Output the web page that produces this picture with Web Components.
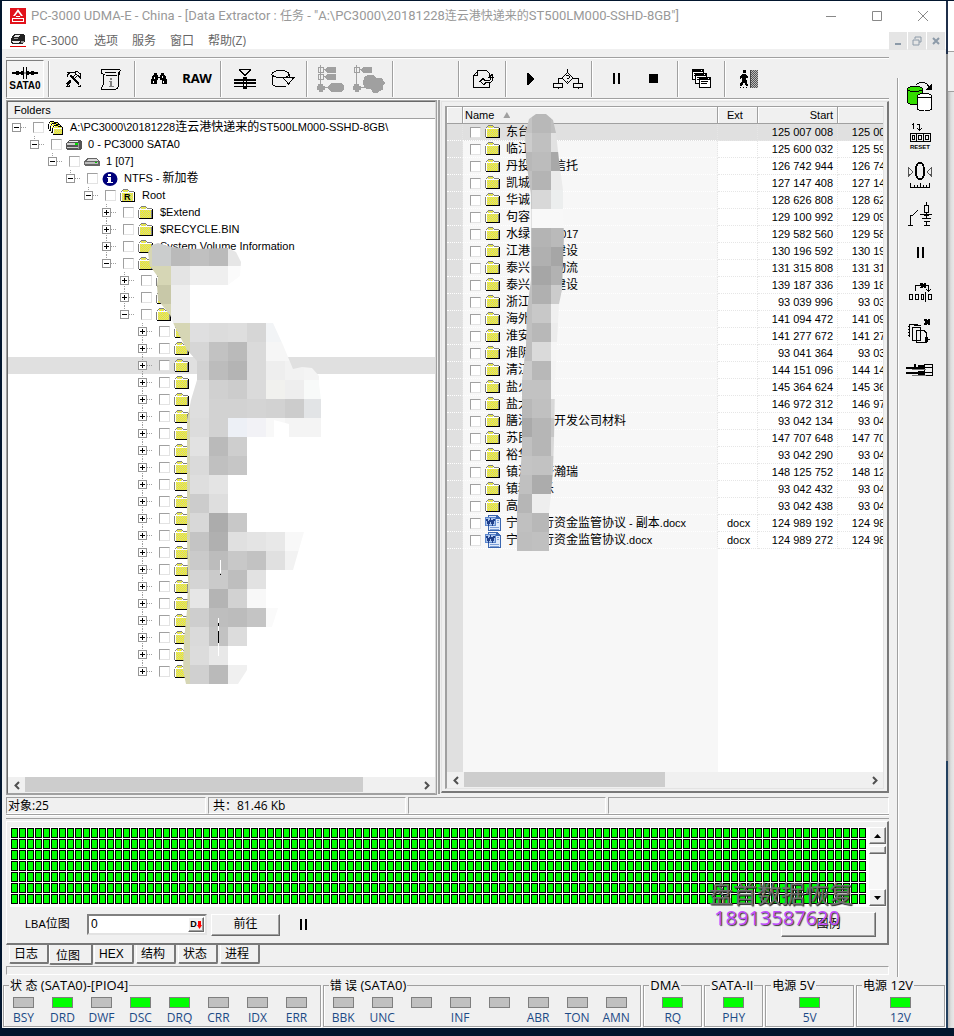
<!DOCTYPE html>
<html lang="zh-CN">
<head>
<meta charset="utf-8">
<title>PC-3000 UDMA-E</title>
<style>
  html { background: #02162e; }
  body {
    margin: 0; min-height: 100vh; display: flex;
    font: 11px/17px "Liberation Sans", "Noto Sans CJK SC", sans-serif; color: #000;
    --ui: "Open Sans", "Noto Sans CJK SC", sans-serif;
    --face: #f0f0f0; --line: #a0a0a0; --dark: #696969;
  }
  pc-desktop { flex: 1; min-width: 0; }
</style>
</head>
<body>
<pc-desktop></pc-desktop>

<script>
const CJK = /([\u3000-\u9fff\uff00-\uffef]+)/;
const esc = s => s.replace(/&/g, "&amp;").replace(/</g, "&lt;");
// Chinese runs are set in their own size beside the Latin text; "_" stands for one blank character cell
const mixed = s => s.split(CJK).map(p => CJK.test(p) ? `<span class="c">${p}</span>` : esc(p).replace(/_/g, '<i class="b"></i>')).join("");
const MIX = `.c{font-size:12px} .b{display:inline-block;width:12px}`;

class Part extends HTMLElement {
  connectedCallback() {
    if (this.shadowRoot) return;
    this.attachShadow({ mode: "open" }).innerHTML =
      `<style>*{box-sizing:border-box} button{font:inherit;color:inherit;margin:0;padding:0;border:0;background:none} ${this.css()}</style>${this.html()}`;
  }
  css() { return ":host{display:block}"; }
  html() { return "<slot></slot>"; }
  a(n, d = "") { return this.getAttribute(n) ?? d; }
}
const def = (name, css, html) => customElements.define(name, class extends Part {
  css() { return typeof css === "function" ? css(this) : css; }
  html() { return typeof html === "function" ? html(this) : (html ?? "<slot></slot>"); }
});

/* ---------- icons: [width, height, markup] ---------- */
const CHK = `<defs><pattern id="k" width="2" height="2" patternUnits="userSpaceOnUse"><path fill="#ff0" d="M0 0h2v2H0z"/><path fill="#c6c6b0" d="M1 0h1v1H1zM0 1h1v1H0z"/></pattern></defs>`;
const L = (d, w = 1, c = "#000") => `<path fill="none" stroke="${c}" stroke-width="${w}" d="${d}"/>`;
const F = (d, c = "#000") => `<path fill="${c}" d="${d}"/>`;
const G = "#a0a0a0";
const ICONS = {
  logo: [16, 16, F("M0 0h16v16H0z", "#e2121b") + `<g shape-rendering="auto">${F("M8 1l5 7h-2L8 4 5 8H3z", "#fff")}${F("M2 10h12v1H2zM3 13h10v1H3zM6 8h4v1H6z", "#fff")}${L("M2.5 14v-4M13.500 14v-4", 1, "#fff")}</g>`],
  drive: [16, 15, F("M4 1h9l2 2v5l-3 3H2L1 9V6z", "#222") + F("M5 2h5l-2 2H3zM2 8h8l-1 2H3z", "#e8e8e8") + F("M4 5h4v1H4zM11 8h3v2h-3z", "#999") + F("M0 13h16v1H0z", "#e00000")],
  folder: [16, 14, CHK + F("M2 3h1v-2h5v2h5v9H2z", "url(#k)") + L("M.5 12V3.500M1 2.500h1M2 1.500h1M3 .5h5M8 1.500h1M9 2.500h5", 1, "#808080") + L("M1.500 12V3.500H13", 1, "#fff") + L("M14.500 3v10M1 12.500h14", 1, "#000") + L("M13.500 4v8", 1, "#808080")],
  root: [16, 14, CHK + F("M2 3h1v-2h5v2h5v9H2z", "url(#k)") + L("M.5 12V3.500M1 2.500h1M2 1.500h1M3 .5h5M8 1.500h1M9 2.500h5", 1, "#808080") + L("M1.500 12V3.500H13", 1, "#fff") + L("M14.500 3v10M1 12.500h14", 1, "#000") + `<text x="4" y="11" font-size="9" font-weight="700" font-family="Liberation Sans">R</text>`],
  folders: [16, 14, CHK + [[0, 0], [2, 2], [4, 4]].map(([x, y]) => `<g transform="translate(${x} ${y})">${F("M1 2h2V1h3v1h4v7H1z", "url(#k)")}${L("M.5 8V2.500M1 1.500h1M2 .5h4M6 1.500h4M10.500 2v7M1 9.500h10")}${L("M1.500 8V3.500H10", 1, "#fff")}</g>`).join("")],
  disk0: [16, 12, F("M3 1h11l2 1v8l-2 1H1l-1-1V4z", "#555") + F("M4 2h9l-2 1H2z", "#eee") + F("M1 4h11v2H1zM1 8h11v1H1z", "#ccc") + F("M9 4h3v2H9z", "#00e000") + F("M12 4h1v6h-1z", "#999")],
  disk1: [16, 9, F("M4 1h9l3 4v3l-1 1H1L0 8V4z", "#666") + F("M4 2h8l2 2H2z", "#d8d8d8") + F("M1 5h13v2H1z", "#bbb") + F("M11 5h2v1h-2z", "#0c0")],
  info: [16, 14, `<g shape-rendering="auto"><ellipse cx="8" cy="7" rx="7.500" ry="7" fill="#00007b"/></g>` + F("M6 2h3v2H6zM5 5h4v5h2v1H5v-1h1V6H5z", "#fff")],
  word: [16, 16, F("M3 0h9l4 4v12H3z", "#3a66b0") + F("M4 1h7v3h4v11H4z", "#dfeafa") + F("M12 5h2v1h-2zM12 7h2v1h-2zM5 12h9v1H5zM5 14h9v1H5z", "#7fa0d6") + F("M0 2h11v9H0z", "#5b86cc") + F("M1 3h9v7H1z", "#a9c4ec") + L("M2 4l1.500 5L5.500 5l2 4L9 4", 2, "#1f3f8a")],
  sata: [28, 12, F("M1 5h11v2H1zM16 5h11v2H16z") + L("M12.500 0v12M15.500 0v12") + F("M10 4h2v4h-2zM16 4h2v4h-2zM5 4h3v4H5zM20 4h3v4h-3z") + F("M13 5h2v2h-2z", "#999")],
  tools: [16, 16, L("M2 4.500L5.500 1h4M2.500 6V4M5 4.500l9 9M6 4.500l8 8M5.500 4.500h1M2 14.500l4-4M1.500 13l4-4M10 6.500l3-2 2 2v-4l-3-2h-2v2l1 1-3 2M2 1.500H6M1 15.500h3v-2M13 15.500h2v-2")],
  scroll: [22, 22, L("M3 1.500h17M2.500 1C0 3 1 6 3.500 6M5 6.500h-2M3.500 6v10C3 18 1 19 1 21M20.500 2c-2 3 0 4-2 6v7c0 4-1 6-3 6M1 21.500h15M5 4.500h11M6 7.500h11M18.500 4v3") + F("M10 10h2v2h-2zM9 13h3v5h2v1H9v-1h1v-4H9z", "#808080")],
  binoc: [16, 14, F("M3 1h3v2h1v2h2V3h1V1h3v2h1l2 5v4h-5V8H9v-2H7v2H6v4H0V8l2-5h1z") + F("M3 5h1v2H3zM2 9h1v2H2zM7 7h1v1H7zM11 4h1v2h-1zM12 9h1v2h-1z", "#fff")],
  saveAll: [22, 20, L("M5 .5h12M5.500 1L11 6.500 16.500 1") + F("M0 10h22v2H0zM0 13h22v2H0zM0 17h22v1H0zM9 8h4v12H9z") + F("M10 12h2v1h-2zM10 15h2v2h-2z", "#fff")],
  dbArrow: [24, 18, L("M1 4.500C1 2 5 .5 9.500 .5S18 2 18 4.500 14 7.500 9.500 7.500 1 6 1 4.500V13c0 2 3 4 8 4 2 0 4 0 6-1M18.500 4v3") + `<path fill="#f0f0f0" stroke="#000" d="M12 7.500h11L17.500 14z"/>`],
  treeA: [28, 28, L("M3.500 0v22M6 4.500h6M6 11.500h6M6 22.500h6M1.500 2.500h5v5h-5zM1.500 9.500h5v5h-5z", 1, G) + F("M10 2h9v6h-9l-2-3zM10 9h9v6h-9l-2-3zM1 19h5v2h2v4H6v2H2v-2H0v-4h1zM14 18h11l2 3v3l-3 3H14l-3-3v-3z", G)],
  treeB: [32, 28, L("M3.500 0v22M6 4.500h6M6 22.500h6M1.500 2.500h5v5h-5z", 1, G) + F("M10 2h9v6h-9l-2-3zM1 19h5v2h2v4H6v2H2v-2H0v-4h1zM11 12l4-2h6l2 3h6l3 5-2 3v4l-4 1-2 2h-4l-2-4h-5l-3-5z", G)],
  pageArrow: [22, 18, L("M5 .5h9.500l3 3V6M17.500 12v5.500h-16V5.500l4-4M2 5.500h3.500V1M8 11.500l3-3 2 2h3c2 0 3-1 3-3h-2l3-3 1 3c0 4-2 5-4 5h-3l-2 2z")],
  play: [7, 12, F("M0 0h1l6 6-6 6H0z")],
  flow: [30, 20, L("M14.500 0v4M14.500 3.500L20 9l-5.500 5.500L9 9zM9 9.500H5.500V14M20 9.500h5V14M.5 14.500h9v4h-9zM20.500 14.500h9v4h-9zM5.500 18v2M25.500 18v2") + F("M13 6h3v1h-3zM16 7h1v2h-1zM14 9h2v1h-2zM14 12h1v1h-1z")],
  pause: [7, 12, F("M0 0h2v11H0zM5 0h2v11H5z")],
  stop: [10, 10, F("M0 0h9v9H0z")],
  windows: [20, 20, [[0, 0], [3, 4], [7, 8]].map(([x, y]) => `<g transform="translate(${x} ${y})">${F("M0 0h12v11H0z")}${F("M1 3h10v7H1zM9 1h1v1H9z", "#fff")}${L("M2 4.500h7M2 6.500h6", 1)}</g>`).join("")],
  exit: [20, 18, F("M4 0h3v3H4zM3 4h4l2 3v1H7l1 3 1 5H7l-2-4-2 4H1v-2l2-3V8L1 9V7z") + `<defs><pattern id="e" width="2" height="2" patternUnits="userSpaceOnUse"><path fill="#bbb" d="M0 0h2v2H0z"/><path fill="#555" d="M0 0h1v1H0zM1 1h1v1H1z"/></pattern></defs>` + F("M12 0h7v18h-7z", "url(#e)") + F("M11 0h1v18h-1z", "#444") + F("M1 17h1v1H1zM4 17h1v1H4zM7 17h1v1H7z")],
  copyDisk: [26, 30, `<path fill="#3d0" stroke="#000" d="M.5 7C.5 5 4 4.500 8 4.500S15.500 5 15.500 7v13c0 2-3 2.500-7.500 2.500S.5 22 .5 20z"/>` + L("M.5 7.500C1 10 15 10 15.500 7M9 2.500C12 0 17 0 20 2l2 3") + F("M25 1v7h-7z") + `<path fill="#fff" stroke="#000" d="M10.500 14C10.500 12 14 11.500 17.500 11.500S24.500 12 24.500 14v12c0 2-3 3-7 3s-7-1-7-3z"/>` + L("M10.500 14.500c1 2 13 2 14 0")],
  reset: [22, 28, L("M4.500 1v6M3 2.500h2M8 2.500h2.500V8M8 6l2.500 2.500L13 6M1.500 11.500h20v8h-20zM7.500 11v8M14.500 11v8M3.500 13.500h2v4h-2zM9.500 13.500h3v4h-3zM16.500 13.500h3v4h-3z") + `<text x="1" y="27" font-size="6" font-weight="700" font-family="Liberation Sans">RESET</text>`],
  calib: [24, 26, L("M12 1c-3 0-4 2-4 8s1 8 4 8 4-2 4-8-1-8-4-8z", 2) + L("M.5 5.500L5 10l-4.500 4zM23.500 5.500L19 10l4.500 4z", 1, "#555") + F("M2 25h20v1H2zM2 21h1v4H2zM6 23h1v2H6zM9 23h1v2H9zM12 21h1v4h-1zM15 23h1v2h-1zM18 23h1v2h-1zM21 21h1v4h-1z")],
  power: [24, 24, L("M0 23.500h5M2.500 23V13.500h2L10 8M12 12.500h12M18.500 0v3M16.500 3.500h4v7h-4zM18.500 11v5M14 16.500h9M16 19.500h6M18.500 20v3M16 23.500h6") + F("M16 12h5v2h-5z")],
  skip: [24, 19, L("M7.500 8V2.500H20.500V8M18 6l2.500 2.500L23 6M1.500 11.500h3v5h-3zM7.500 11.500h3v5h-3zM13.500 11.500h2v5h-2zM17.500 9v10M20.500 11.500h3v5h-3z") + F("M12 0h2l1 1 1-1h2v2l-1 1 1 1v1h-2l-1-1-1 1h-2V4l1-1-1-1z")],
  pages: [24, 24, L("M1 5.500h9M1.500 5v13M0 7.500h2M0 10.500h2M0 13.500h2M0 16.500h2M4.500 8.500h8v13h-8zM6.500 7V6h6M8.500 11.500H16l2 2v9.500H8.500z") + F("M16 0h2l1 1 1-1h2v2l-1 1 1 1v2h-2l-1-1-1 1h-2V4l1-1-1-1zM17 18h3v2h2v1h-2v2h-3z")],
  plug: [28, 14, F("M0 4h16v2H0zM0 9h16v2H0zM8 1h2v3H8zM12 2h6v4h-6zM12 8h6v4h-6z") + L("M18 1.500h8.500v11H18zM17 4.500h9M17 9.500h9") + F("M6 6h14v1H6zM6 12h14v1H6z", "#777")],
};
def("pc-icon", e => {
  const [w, h] = ICONS[e.a("name")];
  return `:host{display:block;flex:none;width:${w}px;height:${h}px} svg{display:block}`;
}, e => {
  const [w, h, m] = ICONS[e.a("name")];
  return `<svg width="${w}" height="${h}" viewBox="0 0 ${w} ${h}" shape-rendering="crispEdges" aria-hidden="true">${m}</svg>`;
});

/* ---------- title and menu ---------- */
def("title-bar", `
  :host{display:flex;align-items:center;height:31px;padding:0 0 2px 8px;background:#fff;color:#999;font:13px/20px Roboto,"Noto Sans CJK SC",sans-serif}
  .t{flex:1;min-width:0;margin-left:5px;white-space:nowrap}
  button{width:46px;height:29px} svg{display:block;margin:auto} ${MIX}`, `
  <pc-icon name="logo"></pc-icon>
  <span class="t">${mixed('PC-3000 UDMA-E - China - [Data Extractor : 任务 - "A:\\PC3000\\20181228连云港快递来的ST500LM000-SSHD-8GB"]')}</span>
  ${[["最小化", "M0 5.500h10"], ["最大化", "M.5 .5h9v9h-9z"], ["关闭", "M0 0l10 10M10 0L0 10"]].map(([n, d]) => `<button aria-label="${n}"><svg width="10" height="10"><path d="${d}" fill="none" stroke="#888"/></svg></button>`).join("")}`);

def("menu-bar", `
  :host{display:flex;align-items:center;height:17px;padding-left:8px;background:#fff;color:#666;font:12px/17px var(--ui)}
  nav{flex:1;display:flex;gap:14px;margin-left:6px}
  nav button:first-child{width:48px;text-align:left}
  .m{display:flex;gap:1px;padding-right:1px} .m button{width:18px;height:18px;background:#e5e5e5;display:grid;place-items:center}`, `
  <pc-icon name="drive"></pc-icon>
  <nav>${["PC-3000", "选项", "服务", "窗口", "帮助(Z)"].map(t => `<button>${t}</button>`).join("")}</nav>
  <div class="m">${[["最小化子窗口", "M2 8h6"], ["还原子窗口", "M3 3V1h6v5H7M1 4h6v5H1z"], ["关闭子窗口", "M2 2l6 6M8 2L2 8"]].map(([n, d], i) => `<button aria-label="${n}"><svg width="10" height="10"><path d="${d}" fill="none" stroke="#8c9aa8" stroke-width="${i == 1 ? 1 : 2}"/></svg></button>`).join("")}</div>`);

/* ---------- toolbars ---------- */
def("tool-button", e => `
  :host{display:block;flex:none}
  button{width:38px;height:38px;display:flex;flex-direction:column;align-items:center;justify-content:center;gap:2px}
  .on{border:1px solid #808080;border-right-color:#fff;border-bottom-color:#fff;background:#f4f4f4}
  b{font:700 10px/10px "Liberation Sans",sans-serif} .raw{font:700 13px/17px "Noto Sans",sans-serif}`, e => {
  const i = e.a("icon"), t = e.a("text");
  return `<button aria-label="${e.a("label")}" class="${e.hasAttribute("pressed") ? "on" : ""}">${i ? `<pc-icon name="${i}"></pc-icon>` : ""}${t ? `<b class="${i ? "" : "raw"}">${t}</b>` : ""}</button>`;
});
def("tool-bar", `
  :host{display:flex;align-items:center;height:43px;margin-top:8px;border-top:1px solid var(--line);border-bottom:1px solid #fff;box-shadow:inset 0 1px #fff,inset 0 -1px var(--line)}
  hr{flex:none;width:2px;height:36px;margin:0 4px;border:0;border-left:1px solid var(--line);border-right:1px solid #fff}
  hr.s{margin-left:3px} .gap{width:56px}`, () => {
  const b = (i, l) => `<tool-button icon="${i}" label="${l}"></tool-button>`, s = "<hr>", n = `<hr class="s">`;
  return `<tool-button pressed icon="sata" text="SATA0" label="SATA0"></tool-button>${s}` + b("tools", "工具") + b("scroll", "信息") + s + b("binoc", "查找") +
    `<tool-button text="RAW" label="RAW"></tool-button>` + s + b("saveAll", "保存") + b("dbArrow", "导出") + s + b("treeA", "展开") + b("treeB", "标记") + s +
    `<div class="gap"></div>${s}` + b("pageArrow", "打开") + n + b("play", "开始") + b("flow", "条件") + s + b("pause", "暂停") + b("stop", "停止") + s + b("windows", "窗口") + n + b("exit", "退出");
});
def("side-bar", `
  :host{display:block;width:57px;padding:29px 0 0 8px}
  div{display:flex;flex-direction:column;align-items:center;gap:1px;height:100%;padding-right:4px;border-left:1px solid var(--line);box-shadow:inset 1px 0 #fff}`,
  `<div>${[["copyDisk", "复制"], ["reset", "复位"], ["calib", "校准"], ["power", "电源"], ["pause", "暂停"], ["skip", "跳过"], ["pages", "页面"], ["plug", "接口"]].map(([i, l]) => `<tool-button icon="${i}" label="${l}"></tool-button>`).join("")}</div>`);

/* ---------- shared small controls ---------- */
const BOX = `input[type=checkbox]{appearance:none;flex:none;margin:0;width:11px;height:11px;background:#fff;border:1px solid #e3e3e3;border-top-color:#a0a0a0;border-left-color:#a0a0a0}`;
def("h-scroll", e => `
  :host{display:grid;grid-template-columns:17px 1fr 17px;height:16px;background:var(--face)}
  button{display:grid;place-items:center} i{display:block;width:${e.a("size")};height:15px;background:#cdcdcd}`, `
  <button aria-label="向左"><svg width="6" height="9"><path d="M5 1L1.500 4.500 5 8" fill="none" stroke="#505050" stroke-width="2"/></svg></button><div><i></i></div>
  <button aria-label="向右"><svg width="6" height="9"><path d="M1 1l3.500 3.500L1 8" fill="none" stroke="#505050" stroke-width="2"/></svg></button>`);

/* mosaic blocks on a 19px lattice, trimmed to a brushed outline */
const VEILS = {
  tree: {
    rows: { 13: "8 cbcdcd bababa c0c0c0 bababa e6e6e6", 14: "7 d6d6b5 d6d6b5 e4e4e4 efefef efefef fbfbfb", 15: "8 c8c8a8 eeeeee", 16: "8 d6d6b5 eeeeee", 17: "9 d6d6b5 dfdfe0 dcdcdc dedede d6d6d6 f2f4f6", 18: "9 d6d6b5 d6d6d6 c2c2c2 bababa dadada f6f6f6 f6f6f6", 19: "10 d2d2d2 bcbcbc b4b4b4 dadada eeeeee f2f2f2 f4f4f4", 20: "10 dedede d0d0d0 cccccc dadada f1f1ee eeeeee f8faf9", 21: "9 d6d6b5 dedede d2d2d2 d2d2d2 d4d4d4 d2d2d2 cccccc e2e4e6", 22: "9 d6d6b5 dcdcdc d2d2d2 edf0f6 f2f2f6 f8f8f8 f4f4f4 f4f4f4", 23: "9 d6d6b5 e2e2e2 bababa cecece", 24: "9 d6d6b5 dadada c0c0c0 c6c6c6", 25: "9 d6d6b5 dedede e4e4e4", 26: "9 d6d6b5 cccccc dedede", 27: "9 d6d6b5 d8d8d8 acacac c8c8c8", 28: "9 d6d6b5 c4c4c4 b0b0b0 e0e0e0 e4e4e4 e8e8e8 f8f8f8", 29: "9 d6d6b5 cacaca bcbcbc c8c8c8 c2c2c2 e0e0e0 f2f2f2", 30: "9 d6d6b5 d4d4d4 cacaca bebebe e2e2e2", 31: "9 d6d6b5 e6e6e6 b4b4b4 d2d2d2 f8f8f8", 32: "9 d6d6b5 cecece bebebe bcbcbc c4c4c4 fafafa", 33: "9 d6d6b5 dadada c2c2c2 dcdcdc", 34: "9 d6d6b5 dcdcdc e8e8e8", 35: "9 d6d6b5 d0d0d0 bababa f0f0f0" },
    clip: "152,245 148,253 150,266 158,277 157,285 158,300 170,315 175,327 187,350 197,361 197,380 191,400 187,420 187,540 188,580 187,610 184,640 183,670 186,684 238,684 247,670 247,627 272,627 278,608 266,608 266,570 293,570 304,532 266,532 250,530 250,437 274,437 274,420 289,424 289,437 321,437 321,399 319,384 319,376 312,368 302,367 293,369 283,345 273,323 190,323 190,285 228,285 240,276 241,262 236,252 228,248 190,249 171,247 158,243",
    marks: "M220 560v13h1v-13zM218 618v38h1v-38z",
    ink: "M220 574h1v1h-1zM218 623h1v3h-1zM218 631h1v12h-1z",
  },
  list: {
    rows: { 6: "27 c4c4c4 b8b8b8 bebebe", 7: "27 cccccc c0c0c0 e2e2e2", 8: "27 b8b8b8 bcbcbc a8a8a8", 9: "27 c0c0c0 b4b4b4 ebebeb", 10: "27 c8c8c8 d8d8d8 eceeee", 11: "27 e0e0e0 f8f8f8 f8f8f8", 12: "27 c0c0c0 b4b4b4 bababa", 13: "27 c0c0c0 b0b0b0 a6a6a6", 14: "27 c0c0c0 a6a6a6 b2b2b2", 15: "27 c0c0c0 b0b0b0 cccccc", 16: "27 c0c0c0 c8c8c8 f0f0f0", 17: "27 c0c0c0 b8b8b8 ececec", 18: "27 bebebe dadada f6f6f6", 19: "27 cacaca b8b8b8 f4f4f4", 20: "27 c2c2c2 c2c2c2 f6f6f6", 21: "27 b8b8b8 c0c0c0 d8d8d8", 22: "27 aaaaaa b6b6b6 c6c6c6", 23: "27 c0c0c0 b6b6b6 d8d8d8", 24: "27 c4c4c4 c2c2c2 c8c8c8", 25: "27 c0c0c0 acacac acacac", 26: "27 b6b6b6 eeeeee", 27: "27 c0c0c0 b8b8b8", 28: "27 bebebe c0c0c0" },
    clip: "536,114 546,114 553,120 556,133 559,160 563,190 563,210 564,235 562,290 559,304 557,342 556,361 555,385 554,440 553,470 551,494 549,513 549,551 517,551 517,513 519,490 522,450 522,380 526,345 527,310 531,280 531,195 526,160 525,135 529,119",
    marks: "", ink: "",
  },
};
def("mosaic-veil", `:host{position:absolute;top:0;left:0;pointer-events:none} svg{display:block}`, e => {
  const v = VEILS[e.a("name")], x = +e.a("ox"), y = +e.a("oy");
  const cells = Object.entries(v.rows).map(([r, s]) => {
    const [c, ...cols] = s.split(" ");
    return cols.map((f, i) => `<path fill="#${f}" d="M${(+c + i) * 19} ${r * 19}h19v19h-19z"/>`).join("");
  }).join("");
  const cap = e.a("name") === "tree" ? `<path fill="#cbcdcd" d="M152 240h19v7h-19z"/><path fill="#d6d6b5" d="M146 245h6v21h-6z"/>` : "";
  return `<svg width="340" height="600" viewBox="${x} ${y} 340 600" shape-rendering="crispEdges"><defs><clipPath id="b"><polygon points="${v.clip}"/></clipPath></defs><g clip-path="url(#b)">${cap}${cells}</g><path fill="#fff" d="${v.marks}"/><path d="${v.ink}"/></svg>`;
});

/* ---------- folder tree ---------- */
def("tree-row", e => `
  :host{display:flex;align-items:center;height:17px;padding-left:${4 + 18 * +e.a("level", "0")}px;white-space:pre;${e.hasAttribute("selected") ? "background:#e0e0e0" : ""}}
  .x{width:9px;height:17px;padding:4px 0;${e.a("level", "0") === "0" ? "" : `background:repeating-linear-gradient(#a0a0a0 0 1px,transparent 1px 2px) 4px 0/1px ${e.hasAttribute("last") ? "8px" : "100%"} no-repeat`}}
  .x button{display:block;width:9px;height:9px;border:1px solid #969696;background:#fff} svg{display:block}
  .d{width:6px;height:1px;margin-right:6px;background:repeating-linear-gradient(90deg,#a0a0a0 0 1px,transparent 1px 2px)}
  label{display:flex;align-items:center} .i{width:16px;display:flex;justify-content:center;margin:0 6px 0 4px}
  ${BOX}${MIX}`, e => {
  const t = e.a("text");
  return `<span class="x"><button aria-label="展开或折叠"><svg width="7" height="7"><path d="${e.hasAttribute("open") ? "M1 3h5v1H1z" : "M1 3h5v1H1zM3 1h1v5H3z"}"/></svg></button></span><span class="d"></span>
  <label><input type="checkbox" aria-label="${esc(t) || "文件夹"}"><span class="i"><pc-icon name="${e.a("icon", "folder")}"></pc-icon></span><span>${mixed(t)}</span></label>`;
});
def("folder-tree", `
  :host{display:flex;flex-direction:column;position:relative;border:1px solid var(--dark);border-right-color:#d8d8d8;border-bottom-color:var(--line);outline:1px solid var(--line);outline-offset:0;margin:1px 1px 0 1px;background:#fff;overflow:hidden}
  header{height:17px;padding-left:6px;line-height:17px;background:var(--face);border-bottom:1px solid var(--line);font-size:11px}
  .rows{flex:1}`, () => {
  const r = (l, t, o = "") => `<tree-row level="${l}" text="${t}" ${o}></tree-row>`;
  return `<header>Folders</header><div class="rows">` +
    r(0, "A:\\PC3000\\20181228连云港快递来的ST500LM000-SSHD-8GB\\", `open last icon="folders"`) + r(1, "0 - PC3000 SATA0", `open last icon="disk0"`) +
    r(2, "1 [07]", `open last icon="disk1"`) + r(3, "NTFS - 新加卷", `open last icon="info"`) + r(4, "Root", `open last icon="root"`) +
    r(5, "$Extend") + r(5, "$RECYCLE.BIN") + r(5, "System Volume Information") + r(5, "", "open last") + r(6, "") + r(6, "") + r(6, "", "open last") +
    Array.from({ length: 21 }, (_, i) => r(7, "", i === 2 ? "selected" : i === 20 ? "last" : "")).join("") +
    `</div><h-scroll size="86%"></h-scroll><mosaic-veil name="tree" ox="8" oy="102"></mosaic-veil>`;
});

/* ---------- file list ---------- */
const FILES = [["东台", 125007008], ["临江", 125600032], ["丹投__信托", 126742944], ["凯城", 127147408], ["华诚", 128626808], ["句容", 129100992], ["水绿__2017", 129582560], ["江港__建设", 130196592], ["泰兴__物流", 131315808], ["泰兴__建设", 139187336], ["浙江", 93039996], ["海外", 141094472], ["淮安", 141277672], ["淮阴", 93041364], ["清江", 144151096], ["盐火", 145364624], ["盐大", 146972312], ["膳江__开发公司材料", 93042134], ["苏民", 147707648], ["裕华", 93042290], ["镇江_济瀚瑞", 148125752], ["镇和_乐", 93042432], ["高", 93042438], ["宁__行资金监管协议 - 副本.docx", 124989192], ["宁__行资金监管协议.docx", 124989272]];
const num = n => String(n).replace(/\B(?=(\d{3})+$)/g, " ");
def("file-list", `
  :host{display:flex;flex-direction:column;margin:1px 0;padding:4px 3px 2px 3px;border:1px solid #e3e3e3;border-right:2px solid #787878;border-bottom:2px solid #787878;position:relative}
  .in{flex:1;display:flex;flex-direction:column;position:relative;overflow:hidden;border:2px solid var(--line);border-right:1px solid #e3e3e3;border-bottom:1px solid #e3e3e3;border-top-width:1px;
    background:linear-gradient(90deg,#e0e0e0 16px,#f7f7f7 16px 271px,#fff 271px)}
  .v{flex:1;overflow:hidden}
  table{border-collapse:separate;border-spacing:0;table-layout:fixed;width:471px}
  th{height:16px;padding:1px 4px 0 2px;line-height:15px;font-weight:400;text-align:left;background:var(--face);border-bottom:1px solid var(--line);border-right:1px solid var(--line);box-shadow:inset 1px 1px #fff}
  th.e{padding-left:9px} th.r,td.r{text-align:right}
  td{height:17px;padding:0 4px 0 0;line-height:16px;white-space:pre;border-bottom:1px dotted #e6e6e6;border-right:1px dotted #e6e6e6}
  td:nth-child(-n+2){border-bottom-color:#fff}
  td.e{padding-left:9px} tr.s td+td{background:#e0e0e0}
  label{display:flex;align-items:center;height:16px;padding-left:7px} label span{margin-left:5px} label .c{margin:0} pc-icon{margin-left:4px}
  .sort{display:inline-block;margin-left:9px;width:7px;height:6px;vertical-align:1px;background:#a0a0a0;clip-path:polygon(50% 0,100% 100%,0 100%)}
  ${BOX}${MIX}`, () => `<div class="in"><div class="v"><table><colgroup><col style="width:16px"><col style="width:255px"><col style="width:40px"><col style="width:80px"><col style="width:80px"></colgroup>
  <thead><tr><th></th><th>Name<i class="sort"></i></th><th class="e">Ext</th><th class="r">Start</th><th></th></tr></thead><tbody>` +
  FILES.map(([n, s], i) => { const d = n.endsWith("docx"); return `<tr class="${i ? "" : "s"}"><td></td><td><label><input type="checkbox"><pc-icon name="${d ? "word" : "folder"}"></pc-icon><span>${mixed(n)}</span></label></td><td class="e">${d ? "docx" : ""}</td><td class="r">${num(s)}</td><td class="r">${num(s - 2048)}</td></tr>`; }).join("") +
  `</tbody></table></div><h-scroll size="50%"></h-scroll></div><mosaic-veil name="list" ox="442" oy="102"></mosaic-veil>`);

/* ---------- object counters ---------- */
def("count-bar", `
  :host{display:grid;grid-template-columns:200px 198px 198px 1fr;gap:2px;height:18px;border-bottom:1px solid var(--line);box-shadow:0 1px #fff;font:12px/15px var(--ui)}
  span{height:17px;padding-left:1px;border:1px solid var(--line);border-right-color:#fff;border-bottom-color:#fff;white-space:pre}
  span+span{padding-left:4px}`, `<span>对象:25</span><span>共：81.46 Kb</span><span></span><span></span>`);

/* ---------- sector map ---------- */
const RAISED = "border:1px solid;border-color:#fff #696969 #696969 #fff;box-shadow:inset -1px -1px #a0a0a0;";
def("v-scroll", `
  :host{display:flex;flex-direction:column;width:17px;background:#f7f7f7}
  button{height:17px;background:var(--face);${RAISED}display:grid;place-items:center} i{flex:1} b{height:8px;margin-top:2px;background:var(--face);${RAISED}}`, `
  <button aria-label="向上"><svg width="7" height="4"><path d="M0 4h7L3.500 0z"/></svg></button><b></b><i></i><button aria-label="向下"><svg width="7" height="4"><path d="M0 0h7L3.500 4z"/></svg></button>`);
def("sector-map", `
  :host{display:block;position:relative;margin-top:3px;padding:2px 0 0;border-top:1px solid var(--line)}
  .p{height:124px;padding:5px 1px 0 3px;border:1px solid #fff;border-right:2px solid #787878;border-bottom:2px solid #787878}
  .m{display:grid;grid-template-columns:minmax(0,1fr) 17px;gap:3px;height:80px;background:#fff} v-scroll{height:79px}
  .g{display:block;width:100%;height:80px}
  .c{display:flex;align-items:center;height:35px;padding-left:15px}
  label{width:62px} .t{font-size:12px}
  .f{display:flex;width:120px;height:21px;padding:1px;background:#fff;border:2px solid;border-color:#808080 #e3e3e3 #e3e3e3 #808080}
  input{flex:1;min-width:0;border:0;padding:0 1px;margin:0;font:12px/15px "Liberation Sans",sans-serif;background:none;outline:0}
  .f button{width:16px;background:var(--face);font:700 9px/13px "Liberation Sans",sans-serif;${RAISED}display:flex;align-items:center;justify-content:center}
  .n{height:22px;background:var(--face);font-size:12px;${RAISED}} .go{width:69px;margin-left:4px} .z{margin-left:20px} .q{width:95px;height:25px;margin:0 10px 0 auto}
  .w{position:absolute;right:35px;top:58px;width:146px;text-align:center;pointer-events:none;white-space:nowrap}
  .w p{margin:0;font:24px/32px "Noto Sans CJK SC",sans-serif;color:#6f6f6f;text-shadow:1px 1px 1px #222}
  .w strong{display:block;margin-top:-3px;margin-right:8px;font:20px/24px "Open Sans",sans-serif;color:#c34cff;text-shadow:1px 1px 1px #333}`, `
  <div class="p"><div class="m"><svg class="g" shape-rendering="crispEdges" aria-label="位图"><defs><pattern id="s" x="1" y="1" width="8" height="11" patternUnits="userSpaceOnUse"><path d="M0 0h7v10H0z"/><path fill="#0f0" d="M1 1h5v8H1z"/></pattern></defs><rect x="1" y="1" width="100%" height="77" fill="url(#s)"/></svg><v-scroll></v-scroll></div>
  <div class="c"><label for="lba">LBA<span class="t">位图</span></label><span class="f"><input id="lba" value="0"><button aria-label="十进制">D<svg width="5" height="8"><path fill="#f00" d="M1 0h3v4h1L2.500 8 0 4h1z"/></svg></button></span>
  <button class="n go">前往</button><button class="z" aria-label="暂停"><pc-icon name="pause"></pc-icon></button><button class="n q">图例</button></div></div>
  <div class="w"><p>盘首数据恢复</p><strong>18913587620</strong></div>`);
def("tab-strip", `
  :host{display:block;padding-bottom:2px} nav{display:flex;align-items:flex-start;gap:2px;height:21px;padding-left:3px;font-size:12px}
  button{width:40px;height:19px;padding:0 0 1px 4px;text-align:left;line-height:18px;border:solid;border-width:0 2px 2px 1px;border-color:#fff #787878 #787878 #fff;border-radius:0 0 2px 2px}
  button.on{width:44px;height:21px;margin:-1px -1px 0 -2px;padding:4px 0 0 6px;line-height:17px;background:var(--face)}
  div{height:9px;border:1px solid var(--line);border-right-color:#fff;border-bottom-color:#fff}`,
  `<nav>${["日志", "位图", "HEX", "结构", "状态", "进程"].map((t, i) => `<button class="${i == 1 ? "on" : ""}">${t}</button>`).join("")}</nav><div></div>`);

/* ---------- register lamps ---------- */
def("led-lamp", e => `
  :host{display:flex;flex-direction:column;align-items:center;width:39px;gap:1px} i{width:21px;height:11px;border:1px solid #7f7f7f;background:${e.hasAttribute("on") ? "#0f0" : "#c0c0c0"}} span{height:17px;line-height:17px}`,
  e => `<i></i><span>${e.a("label")}</span>`);
def("led-group", e => `
  :host{display:block;min-width:0;font:12px/17px var(--ui)}
  fieldset{display:flex;margin:0;min-width:0;height:50px;padding:0;border:1px solid var(--line);box-shadow:1px 1px #fff,inset 1px 0 #fff}
  legend{height:17px;margin-left:5px;padding:0 1px;white-space:pre;font-size:13px;line-height:17px}
  div{flex:1;display:flex;justify-content:${e.children.length > 1 ? "flex-start" : "center"};padding-top:3px;color:#1c4a86} ${MIX}`,
  e => `<fieldset><legend>${mixed(e.a("name"))}</legend><div><slot></slot></div></fieldset>`);
def("led-panel", `:host{display:grid;grid-template-columns:318fr 319fr 59fr 59fr 89fr 89fr;gap:2px;padding:0 1px 1px}`, () => {
  const l = s => s.split(",").map(x => `<led-lamp label="${x.replace("+", "")}" ${x.includes("+") ? "on" : ""}></led-lamp>`).join("");
  return [["状 态 (SATA0)-[PIO4]", "BSY,DRD+,DWF,DSC+,DRQ+,CRR,IDX,ERR"], ["错 误 (SATA0)", "BBK,UNC,,INF,,ABR,TON,AMN"], ["DMA", "RQ+"], ["SATA-II", "PHY+"], ["电源 5V", "5V+"], ["电源 12V", "12V+"]].map(([n, s]) => `<led-group name="${n}">${l(s)}</led-group>`).join("");
});

/* ---------- window and desktop ---------- */
def("pc-desktop", `
  :host{display:grid;grid-template-columns:minmax(0,1fr) 2px 6px;padding:1px 0 8px 2px}
  .win{display:flex;flex-direction:column;min-width:0;background:var(--face)}
  .mid{flex:1;display:grid;grid-template-columns:minmax(0,1fr) 57px;padding:0 0 0 4px}
  main{display:flex;flex-direction:column;min-width:0}
  .panes{flex:1;display:grid;grid-template-columns:431fr 2px 448fr;gap:1px;min-height:0;padding-bottom:3px} .panes>*{min-width:0}
  .split{background:var(--line)}
  .edge{background:linear-gradient(#1f2f4a 53px,#8f8f8f 53px 70%,#909090 760px,#23405f 760px)}
  .back{background:linear-gradient(#fff 50px,#a0a0a0 50px 51px,#f0f0f0 51px 90px,#a0a0a0 90px 91px,transparent 91px),linear-gradient(90deg,#bbb,#dedede 50%,#e8e8e8)}`, `
  <div class="win"><title-bar></title-bar><menu-bar></menu-bar>
    <div class="mid"><main><tool-bar></tool-bar><div class="panes"><folder-tree></folder-tree><div class="split"></div><file-list></file-list></div>
      <count-bar></count-bar><sector-map></sector-map><tab-strip></tab-strip></main><side-bar></side-bar></div>
    <led-panel></led-panel></div><div class="edge"></div><div class="back"></div>`);
</script>
</body>
</html>
